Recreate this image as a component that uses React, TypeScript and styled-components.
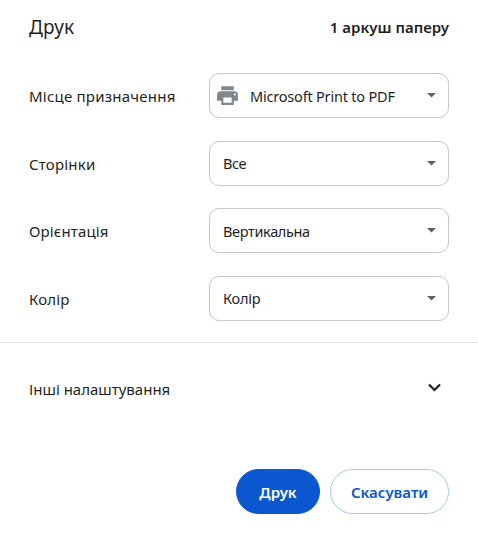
import React from "react";
import styled, { createGlobalStyle } from "styled-components";

const GlobalStyle = createGlobalStyle`
  * { box-sizing: border-box; }
  body { margin: 0; background: #fff; }
`;

const Dialog = styled.main`
  width: 478px;
  height: 533px;
  display: flex;
  flex-direction: column;
  overflow: hidden;
  color: #1f1f1f;
  background: #fff;
  font-family: "Noto Sans", "Open Sans", sans-serif;
`;

const Text = styled.span<{ $size?: number; $tracking?: number; $weight?: number }>`
  margin: 0;
  font-size: ${(p) => p.$size ?? 15}px;
  letter-spacing: ${(p) => p.$tracking ?? 0}px;
  font-weight: ${(p) => p.$weight ?? 400};
  line-height: 22px;
  white-space: nowrap;
`;

const Header = styled.header`
  height: 73px;
  padding: 16px 29px 0;
  display: flex;
  justify-content: space-between;
  align-items: flex-start;
`;

const Settings = styled.section`
  height: 270px;
  padding: 0 29px;
  border-bottom: 1px solid #e8e8e8;
`;

const Row = styled.div`
  height: 67.5px;
  display: grid;
  grid-template-columns: 180px 240px;
  align-items: start;
`;

const Label = styled.div`
  height: 46px;
  display: flex;
  align-items: center;
`;

const Select = styled.button`
  height: 45px;
  padding: 0 12px 0 13px;
  display: flex;
  align-items: center;
  border: 1px solid #c7c7c7;
  border-radius: 10px;
  background: #fff;
  color: inherit;
  font-family: inherit;
`;

const Printer = styled.svg`
  width: 25px;
  height: 25px;
  margin: 0 10px 0 -8px;
  fill: #80868b;
`;

const Arrow = styled.svg`
  width: 9px;
  height: 5px;
  margin-left: auto;
  fill: #5f6368;
`;

const More = styled.button`
  height: 91px;
  padding: 0 37px 0 29px;
  display: flex;
  align-items: center;
  justify-content: space-between;
  border: 0;
  background: transparent;
  color: inherit;
  font-family: inherit;
`;

const Chevron = styled.svg`
  width: 13px;
  height: 9px;
  margin-top: -2px;
  fill: none;
  stroke: #1f1f1f;
  stroke-width: 2.2;
`;

const Footer = styled.footer`
  height: 64px;
  margin-top: auto;
  padding-right: 29px;
  display: flex;
  justify-content: flex-end;
  gap: 10px;
`;

const Action = styled.button<{ $primary?: boolean }>`
  width: ${(p) => (p.$primary ? 84 : 119)}px;
  height: 45px;
  padding: 0;
  display: flex;
  align-items: center;
  justify-content: center;
  border: 1px solid ${(p) => (p.$primary ? "#0b57d0" : "#a8c7fa")};
  border-radius: 23px;
  background: ${(p) => (p.$primary ? "#0b57d0" : "#fff")};
  color: ${(p) => (p.$primary ? "#fff" : "#0b57d0")};
  font-family: inherit;
`;

type Setting = {
  label: string;
  value: string;
  labelTracking: number;
  valueTracking: number;
  printer?: boolean;
};

const settings: Setting[] = [
  { label: "Місце призначення", value: "Microsoft Print to PDF", labelTracking: 0.22, valueTracking: -0.2, printer: true },
  { label: "Сторінки", value: "Все", labelTracking: 0.2, valueTracking: -0.5 },
  { label: "Орієнтація", value: "Вертикальна", labelTracking: 0.15, valueTracking: -0.35 },
  { label: "Колір", value: "Колір", labelTracking: 0.15, valueTracking: -0.2 },
];

export default function App() {
  return (
    <Dialog>
      <GlobalStyle />
      <Header>
        <Text as="h1" $size={19} $tracking={0.15}>Друк</Text>
        <Text $weight={600} $tracking={0.03}>1 аркуш паперу</Text>
      </Header>
      <Settings>
        {settings.map((s) => (
          <Row key={s.label}>
            <Label><Text $tracking={s.labelTracking}>{s.label}</Text></Label>
            <Select type="button">
              {s.printer && (
                <Printer viewBox="0 0 24 24" aria-hidden="true">
                  <path d="M19 8H5c-1.66 0-3 1.34-3 3v6h4v4h12v-4h4v-6c0-1.66-1.34-3-3-3zm-3 11H8v-5h8v5zm3-7c-.55 0-1-.45-1-1s.45-1 1-1 1 .45 1 1-.45 1-1 1zm-1-9H6v4h12V3z" />
                </Printer>
              )}
              <Text $size={14.5} $tracking={s.valueTracking}>{s.value}</Text>
              <Arrow viewBox="0 0 9 5" aria-hidden="true"><path d="M0 0H9L4.5 4.5Z" /></Arrow>
            </Select>
          </Row>
        ))}
      </Settings>
      <More type="button">
        <Text>Інші налаштування</Text>
        <Chevron viewBox="0 0 13 9" aria-hidden="true"><path d="M1 1.5 6.5 7 12 1.5" /></Chevron>
      </More>
      <Footer>
        <Action type="button" $primary><Text $weight={600}>Друк</Text></Action>
        <Action type="button"><Text $weight={600}>Скасувати</Text></Action>
      </Footer>
    </Dialog>
  );
}
